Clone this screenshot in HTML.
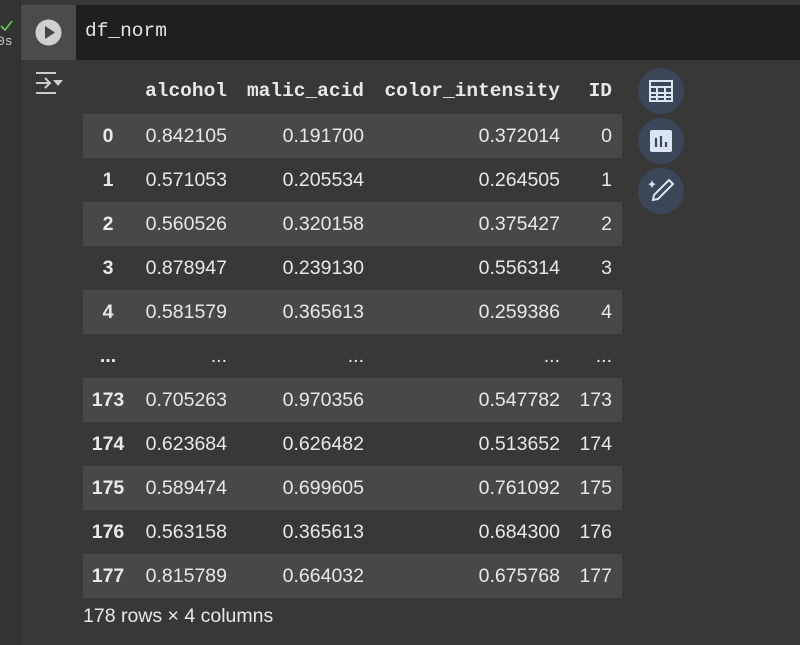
<!DOCTYPE html>
<html><head><style>
body{margin:0;width:800px;height:645px;background:#383838;overflow:hidden;position:relative;font-family:"Liberation Sans",sans-serif;color:#e8e8e8}
.gut{position:absolute;left:0;top:0;width:20px;height:645px;background:#333;border-right:1px solid #2c2c2c}
.runbox{position:absolute;left:21px;top:5px;width:55px;height:55px;background:#4b4b4b}
.code{position:absolute;left:76px;top:5px;width:724px;height:55px;background:#1f1f1f;font-family:"Liberation Mono",monospace;font-size:19.5px;color:#e4e4e4;line-height:53px;padding-left:9px;box-sizing:border-box}
.tbl{position:absolute;left:83px;top:70px;width:539px}
.r{position:relative;height:44px;font-size:19.5px}
.r.a{background:#484848}
.r span{position:absolute;top:11px;text-align:right}
.h span{font-family:"Liberation Mono",monospace;font-weight:bold;font-size:19.5px;top:10px}
.r span.c0{left:0;width:50px;text-align:center;font-weight:bold}
.c1{right:395px}.c2{right:258px}.c3{right:62px}.c4{right:10px}
.btn{position:absolute;left:638px;width:46px;height:46px;border-radius:50%;background:#3b4659}
</style></head><body>
<div class="gut"></div>
<div style="position:absolute;left:-3px;top:34px;font-family:'Liberation Mono',monospace;font-size:13px;color:#ccc">0s</div>
<svg style="position:absolute;left:0px;top:20px" width="14" height="12"><path d="M1 6 L5 10 L12 1" stroke="#5bd05b" stroke-width="1.6" fill="none"/></svg>
<div class="runbox"><svg style="position:absolute;left:14px;top:14px" width="27" height="27"><circle cx="13.5" cy="13.5" r="13" fill="#cfcfcf"/><path d="M10 7 L20 13.5 L10 20Z" fill="#444"/></svg></div>
<div class="code">df_norm</div>
<svg style="position:absolute;left:34px;top:70px" width="32" height="26" fill="none" stroke="#ccc" stroke-width="2"><path d="M2 3 H22 M2 23 H22 M2 13 H16 M11 8 L16 13 L11 18"/><path d="M19 10 H29 L24 16Z" fill="#ccc" stroke="none"/></svg>
<div class="tbl">
<div class="r h" style="height:44px"><span class="c1">alcohol</span><span class="c2">malic_acid</span><span class="c3">color_intensity</span><span class="c4">ID</span></div>
<div class="r a"><span class="c0">0</span><span class="c1">0.842105</span><span class="c2">0.191700</span><span class="c3">0.372014</span><span class="c4">0</span></div>
<div class="r"><span class="c0">1</span><span class="c1">0.571053</span><span class="c2">0.205534</span><span class="c3">0.264505</span><span class="c4">1</span></div>
<div class="r a"><span class="c0">2</span><span class="c1">0.560526</span><span class="c2">0.320158</span><span class="c3">0.375427</span><span class="c4">2</span></div>
<div class="r"><span class="c0">3</span><span class="c1">0.878947</span><span class="c2">0.239130</span><span class="c3">0.556314</span><span class="c4">3</span></div>
<div class="r a"><span class="c0">4</span><span class="c1">0.581579</span><span class="c2">0.365613</span><span class="c3">0.259386</span><span class="c4">4</span></div>
<div class="r"><span class="c0">...</span><span class="c1">...</span><span class="c2">...</span><span class="c3">...</span><span class="c4">...</span></div>
<div class="r a"><span class="c0">173</span><span class="c1">0.705263</span><span class="c2">0.970356</span><span class="c3">0.547782</span><span class="c4">173</span></div>
<div class="r"><span class="c0">174</span><span class="c1">0.623684</span><span class="c2">0.626482</span><span class="c3">0.513652</span><span class="c4">174</span></div>
<div class="r a"><span class="c0">175</span><span class="c1">0.589474</span><span class="c2">0.699605</span><span class="c3">0.761092</span><span class="c4">175</span></div>
<div class="r"><span class="c0">176</span><span class="c1">0.563158</span><span class="c2">0.365613</span><span class="c3">0.684300</span><span class="c4">176</span></div>
<div class="r a"><span class="c0">177</span><span class="c1">0.815789</span><span class="c2">0.664032</span><span class="c3">0.675768</span><span class="c4">177</span></div>
</div>
<div style="position:absolute;left:83px;top:605px;font-size:19.5px">178 rows × 4 columns</div>
<div class="btn" style="top:68px"><svg style="position:absolute;left:10px;top:10px" width="26" height="26" fill="none" stroke="#dbe4f5" stroke-width="2"><rect x="2" y="3" width="22" height="20"/><path d="M2 9H24M2 15H24M2 19H24M9 9V23M17 9V23"/></svg></div>
<div class="btn" style="top:118px"><svg style="position:absolute;left:11px;top:11px" width="24" height="24"><rect x="1" y="1" width="22" height="22" rx="2" fill="#dbe4f5"/><path d="M7 9V18M12 7V18M17 13V18" stroke="#3b4659" stroke-width="2.2"/></svg></div>
<div class="btn" style="top:168px"><svg style="position:absolute;left:9px;top:8px" width="30" height="30" fill="none" stroke="#dbe4f5" stroke-width="2"><path d="M22 4 L26 8 L11 23 L6 24 L7 19Z"/><path d="M5 4 Q6 8 9 8 Q6 9 5 12 Q4 9 1 8 Q4 8 5 4Z" fill="#dbe4f5" stroke="none"/></svg></div>
</body></html>
